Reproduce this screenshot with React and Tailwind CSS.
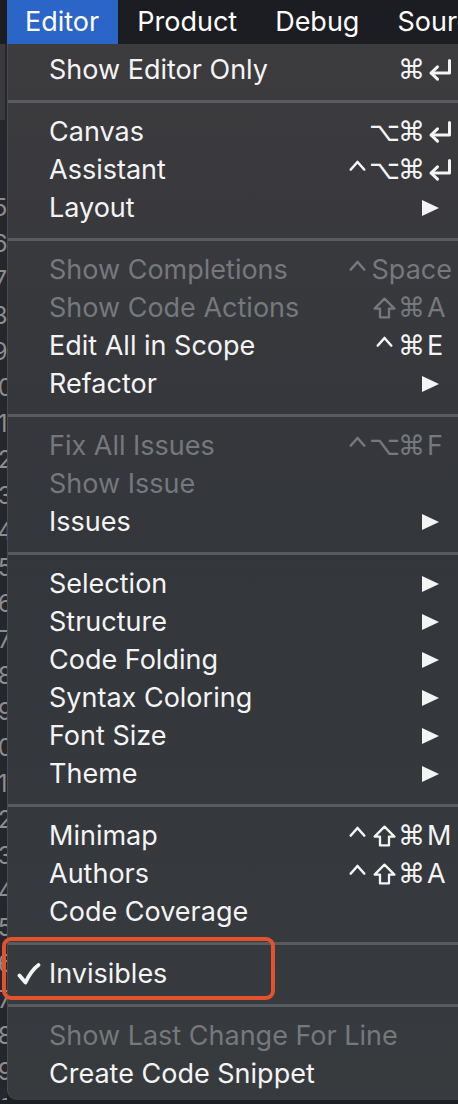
import React from 'react';

const SYM = { fontFamily: '"DejaVu Sans", sans-serif' };

const sections = [
    [{ label: 'Show Editor Only', mods: ['⌘'], key: '↩' }],
    [
        { label: 'Canvas', mods: ['⌥', '⌘'], key: '↩' },
        { label: 'Assistant', mods: ['⌃', '⌥', '⌘'], key: '↩' },
        { label: 'Layout', sub: true },
    ],
    [
        { label: 'Show Completions', disabled: true, space: true },
        { label: 'Show Code Actions', disabled: true, mods: ['⇧', '⌘'], key: 'A' },
        { label: 'Edit All in Scope', mods: ['⌃', '⌘'], key: 'E' },
        { label: 'Refactor', sub: true },
    ],
    [
        { label: 'Fix All Issues', disabled: true, mods: ['⌃', '⌥', '⌘'], key: 'F' },
        { label: 'Show Issue', disabled: true },
        { label: 'Issues', sub: true },
    ],
    [
        { label: 'Selection', sub: true },
        { label: 'Structure', sub: true },
        { label: 'Code Folding', sub: true },
        { label: 'Syntax Coloring', sub: true },
        { label: 'Font Size', sub: true },
        { label: 'Theme', sub: true },
    ],
    [
        { label: 'Minimap', mods: ['⌃', '⇧', '⌘'], key: 'M' },
        { label: 'Authors', mods: ['⌃', '⇧', '⌘'], key: 'A' },
        { label: 'Code Coverage' },
    ],
    [{ label: 'Invisibles', checked: true }],
    [
        { label: 'Show Last Change For Line', disabled: true },
        { label: 'Create Code Snippet' },
    ],
];

const gutter = Array.from({ length: 26 }, (_, i) => 15 + i);

function Control() {
    return (
        <svg width="17" height="20" viewBox="0 0 17 20" className="mx-auto">
            <path d="M1.8 9.5 L8.5 2 L15.2 9.5" fill="none" stroke="currentColor" strokeWidth="2.6" strokeLinecap="round" strokeLinejoin="round" />
        </svg>
    );
}

function Shift() {
    return (
        <svg width="23" height="22" viewBox="0 0 23 22" className="mx-auto">
            <path d="M11.5 1.6 L21.4 11.6 L16 11.6 L16 20.4 L7 20.4 L7 11.6 L1.6 11.6 Z" fill="none" stroke="currentColor" strokeWidth="2.3" strokeLinejoin="round" />
        </svg>
    );
}

function Return() {
    return (
        <svg width="26" height="25" viewBox="0 0 26 25">
            <path d="M22.5 2.5 L22.5 15 L4.5 15" fill="none" stroke="currentColor" strokeWidth="3" strokeLinecap="round" strokeLinejoin="round" />
            <path d="M10.5 8.8 L4 15 L10.5 21.2" fill="none" stroke="currentColor" strokeWidth="3" strokeLinecap="round" strokeLinejoin="round" />
        </svg>
    );
}

function Mod({ m }) {
    if (m === '⌃') return <Control />;
    if (m === '⇧') return <Shift />;
    return <span style={SYM}>{m}</span>;
}

function Shortcut({ item }) {
    if (item.sub) {
        return (
            <svg width="17" height="16" viewBox="0 0 17 16" className="mr-[19px] shrink-0">
                <polygon points="0,0 17,8 0,16" fill="#f4f4f4" />
            </svg>
        );
    }
    if (item.space) {
        return (
            <div className="flex items-center pr-[6px]">
                <span className="w-[27px] flex justify-center"><Control /></span>
                <span className="ml-[1px]">Space</span>
            </div>
        );
    }
    if (!item.mods) return null;
    return (
        <div className="flex items-center">
            {item.mods.map((m, i) => (
                <span key={i} className="w-[27px] flex justify-center items-center">
                    <Mod m={m} />
                </span>
            ))}
            <span className="w-[33px] pl-[2px] flex items-center">
                {item.key === '↩' ? <Return /> : item.key}
            </span>
        </div>
    );
}

function MenuRow({ item }) {
    return (
        <div
            className={`flex items-center h-[38px] text-[27px] ${
                item.disabled ? 'text-[#75787d]' : 'text-[#f4f4f4]'
            }`}
        >
            <div className="w-[41px] shrink-0 flex justify-center">
                {item.checked && (
                    <svg width="24" height="22" viewBox="0 0 24 22">
                        <path d="M2.5 12.5 L8.5 19.5 C12 12 16 6 21.5 2" fill="none" stroke="#f4f4f4" strokeWidth="3.8" strokeLinecap="round" strokeLinejoin="round" />
                    </svg>
                )}
            </div>
            <span className="flex-1 whitespace-nowrap">{item.label}</span>
            <Shortcut item={item} />
        </div>
    );
}

export default function App() {
    return (
        <div
            className="relative w-[458px] h-[1104px] overflow-hidden bg-[#1e1f24]"
            style={{ fontFamily: 'Inter, "Noto Sans", sans-serif' }}
        >
            {/* menu bar */}
            <div className="flex items-stretch h-[44px] bg-[#1c1d22] pl-[7px] text-[27px] text-white whitespace-nowrap">
                <div className="flex items-center pl-[18px] pr-[19px] bg-[#2b65c7]">Editor</div>
                <div className="flex items-center px-[19px]">Product</div>
                <div className="flex items-center px-[19px]">Debug</div>
                <div className="flex items-center px-[19px]">Source Control</div>
            </div>

            <div className="flex">
                {/* editor gutter peeking out */}
                <div className="w-[7px] h-[1056px] shrink-0 overflow-hidden bg-[#26272c]">
                    <div className="h-[76px] w-[5px] bg-[#3a3a3d]" />
                    <div className="h-[70px]" />
                    <div className="w-[24px] -ml-[17px] text-right text-[24px] leading-[36px] text-[#8c8d92]">
                        {gutter.map((n) => (
                            <div key={n}>{n}</div>
                        ))}
                    </div>
                </div>

                {/* dropdown */}
                <div className="flex-1 h-[1056px] pt-[7px] rounded-bl-[10px] border-l border-[#4a4b4f] bg-linear-to-b from-[#3c3b3e] via-[#33363b] to-[#383b3e] overflow-hidden">
                    {sections.map((sec, si) => (
                        <div key={si}>
                            {si > 0 && (
                                <div className="h-[24px] flex items-center">
                                    <div className="h-[3px] w-full bg-[#5a5b5f]" />
                                </div>
                            )}
                            {sec.map((item) => (
                                <MenuRow key={item.label} item={item} />
                            ))}
                        </div>
                    ))}
                </div>
            </div>

            {/* highlight annotation */}
            <div className="absolute left-[2px] top-[937px] w-[273px] h-[63px] rounded-[9px] border-[4px] border-[#e2522c]" />
        </div>
    );
}
